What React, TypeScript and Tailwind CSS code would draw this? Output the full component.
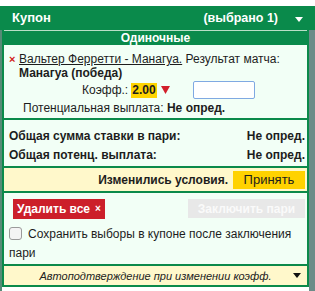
import React from 'react'

const font = { fontFamily: '"Liberation Sans", Arial, sans-serif' }

const Separator = () => <div className="h-[2px] bg-[#0b8a4a]" />

export const Coupon: React.FC = () => {
  return (
    <div className="w-[315px] h-[291px] bg-white overflow-hidden flex flex-col" style={font}>
      <div className="h-[6px] bg-white shrink-0" />

      {/* Заголовок купона */}
      <div className="h-[24px] shrink-0 bg-[#0a8a4b] flex items-center pl-[12px] pr-[12px] text-white font-bold text-[13px]">
        <span>Купон</span>
        <span className="ml-auto mr-[17px] text-[12.5px]">(выбрано 1)</span>
        <svg width="8" height="5" viewBox="0 0 8 5" className="mt-[2px]">
          <path d="M0 0h8L4 5z" fill="#fff" />
        </svg>
      </div>

      <div className="flex flex-1">
        <div className="w-[2px] bg-[#568b76]" />
        <div className="w-[307px] flex flex-col">
          <div className="bg-[#0a8a4b] px-[2px]">
            <div className="h-px bg-[#b9dfc7]" />
          </div>
          <div className="h-[14px] bg-[#0a8a4b] text-white font-bold text-[12px] leading-[14px] text-center">
            Одиночные
          </div>

          <div className="border-x-2 border-b-2 border-[#0b8a4a] bg-[#f2fff6] text-[12px] leading-[14px] text-[#1d1d1d]">
            {/* Ставка */}
            <div className="pt-[7px] pb-[3px] pl-[4px] pr-[4px]">
              <div className="flex">
                <span className="text-[#d22020] font-bold text-[11px] w-[11px] pl-[1px]">×</span>
                <div>
                  <span className="underline">Вальтер Ферретти - Манагуа.</span> Результат матча:
                  <div className="font-bold leading-[15px]">Манагуа (победа)</div>
                </div>
              </div>
              <div className="flex items-center h-[18px]">
                <span className="ml-[74px]">Коэфф.:</span>
                <span className="ml-[3px] font-bold bg-[#ffd400] px-[1px] leading-[15px]">2.00</span>
                <svg width="9" height="8" viewBox="0 0 9 8" className="ml-[4px]">
                  <path d="M0 0h9L4.5 8z" fill="#d2202b" />
                </svg>
                <div className="ml-[23px] w-[62px] h-[18px] bg-white border border-[#7fa9e2] rounded-[2px]" />
              </div>
              <div className="pl-[15px] mt-[2px]">
                Потенциальная выплата: <span className="font-bold">Не опред.</span>
              </div>
            </div>
            <Separator />

            {/* Итоги */}
            <div className="pl-[5px] pr-[2px] pt-[9px] pb-[4px] font-bold flex flex-col gap-[5px]">
              <div className="flex justify-between">
                <span>Общая сумма ставки в пари:</span>
                <span>Не опред.</span>
              </div>
              <div className="flex justify-between">
                <span>Общая потенц. выплата:</span>
                <span>Не опред.</span>
              </div>
            </div>
            <Separator />

            {/* Изменились условия */}
            <div className="bg-[#fff8cb] h-[23px] flex items-center justify-end pr-[2px] font-bold">
              <span>Изменились условия.</span>
              <button className="ml-[5px] h-[18px] w-[72px] bg-[#ffd200] font-normal text-[13px] text-[#1d1d1d]">
                Принять
              </button>
            </div>
            <Separator />

            {/* Действия */}
            <div className="pl-[5px] pr-[2px] pt-[6px] pb-[1px]">
              <div className="flex justify-between">
                <button className="ml-[4px] h-[20px] px-[4px] bg-[#cc1f2a] text-white font-bold text-[12px] flex items-center gap-[5px]">
                  Удалить все <span className="text-[10px]">×</span>
                </button>
                <button className="h-[19px] w-[117px] bg-[#e8e8e8] text-[#fafafa] font-bold text-[12px]">
                  Заключить пари
                </button>
              </div>
              <div className="mt-[6px] text-[12px] leading-[19px] text-[#1d1d1d]">
                <span className="inline-block align-[-2px] w-[13px] h-[13px] rounded-[3px] border border-[#9a9a9a] bg-[#f4f4f4]" />
                <span className="ml-[6px]">Сохранить выборы в купоне после заключения пари</span>
              </div>
            </div>
            <Separator />

            {/* Автоподтверждение */}
            <div className="bg-[#fff8cb] h-[19px] flex items-center text-[11px] italic text-[#222]">
              <span className="flex-1 text-center pl-[14px]">Автоподтверждение при изменении коэфф.</span>
              <svg width="8" height="5" viewBox="0 0 8 5" className="mr-[6px]">
                <path d="M0 0h8L4 5z" fill="#111" />
              </svg>
            </div>
          </div>
        </div>
        <div className="w-[6px] bg-[#6c8c88]" />
      </div>
    </div>
  )
}

export default Coupon
